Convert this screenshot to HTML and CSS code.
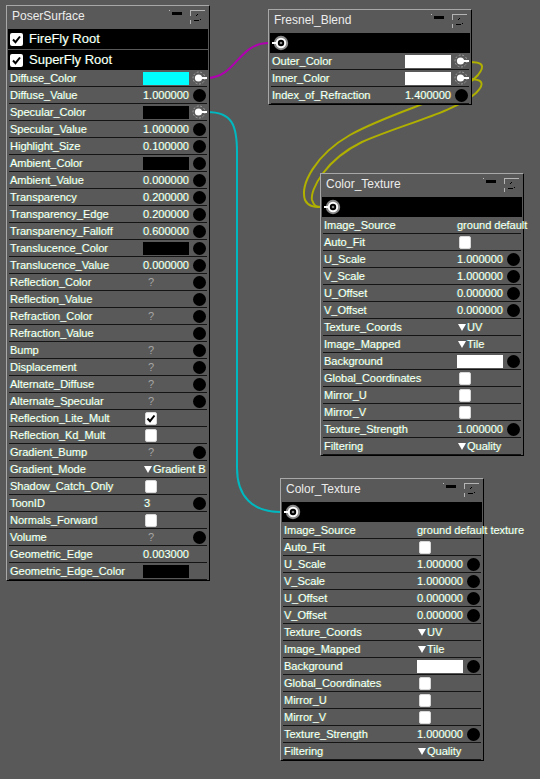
FILE: index.html
```html
<!DOCTYPE html>
<html>
<head>
<meta charset="utf-8">
<link rel="stylesheet" href="styles.css">
</head>
<body>
<svg class="wires" width="540" height="779" viewBox="0 0 540 779">
  <path d="M207,78 C236,78 238,43 269,43" stroke="#b000b0" />
  <path d="M207,112 C232,112 237,125 237,152 L237,468 C237,496 252,512 281,512" stroke="#00b8c0" />
  <path d="M469,62 C482,62 486,65 478,75 C460,96 395,110 350,135 C315,155 300,185 305,200 C308,206 313,207 321,207" stroke="#b0b000" />
  <path d="M469,79 C482,79 486,83 476,93 C455,112 400,125 362,142 C325,160 310,190 312,200 C314,206 316,207 321,207" stroke="#b0b000" />
</svg>

<!-- PoserSurface -->
<div class="node n-poser">
  <div class="title"><span>PoserSurface</span>
    <span class="ctrls"><span class="mindot"></span><span class="min"></span>
      <svg class="opt" width="15" height="14" viewBox="0 0 15 14" shape-rendering="crispEdges"><path d="M0 0.5H15M0.5 0V6M0.5 10V14" stroke="#b4b4b4" fill="none"/><rect x="7" y="4" width="1" height="1"/><rect x="6" y="5" width="1" height="1"/><rect x="4" y="10" width="5" height="1"/><rect x="10" y="9" width="1" height="1"/></svg>
    </span>
  </div>
  <div class="root"><span class="rcb"><svg width="13" height="13" viewBox="0 0 13 13"><path d="M3 6.5 L5.5 9.2 L10 3.5" stroke="#000" stroke-width="2" fill="none"/></svg></span>FireFly Root</div>
  <div class="root"><span class="rcb"><svg width="13" height="13" viewBox="0 0 13 13"><path d="M3 6.5 L5.5 9.2 L10 3.5" stroke="#000" stroke-width="2" fill="none"/></svg></span>SuperFly Root</div>

  <div class="row"><span class="lbl">Diffuse_Color</span><span class="val"><span class="sw sw-cyan"></span></span><span class="port"><svg class="plug" width="15" height="14" viewBox="0 0 15 14"><circle cx="7" cy="7" r="6" fill="none" stroke="#a0a0a0" stroke-dasharray="2 1.6"/><circle cx="6.5" cy="7" r="3.6" fill="#fff"/><rect x="7" y="6" width="8" height="2" fill="#fff"/></svg></span></div>
  <div class="row"><span class="lbl">Diffuse_Value</span><span class="val">1.000000</span><span class="port"><span class="dot"></span></span></div>
  <div class="row"><span class="lbl">Specular_Color</span><span class="val"><span class="sw sw-black"></span></span><span class="port"><svg class="plug" width="15" height="14" viewBox="0 0 15 14"><circle cx="7" cy="7" r="6" fill="none" stroke="#a0a0a0" stroke-dasharray="2 1.6"/><circle cx="6.5" cy="7" r="3.6" fill="#fff"/><rect x="7" y="6" width="8" height="2" fill="#fff"/></svg></span></div>
  <div class="row"><span class="lbl">Specular_Value</span><span class="val">1.000000</span><span class="port"><span class="dot"></span></span></div>
  <div class="row"><span class="lbl">Highlight_Size</span><span class="val">0.100000</span><span class="port"><span class="dot"></span></span></div>
  <div class="row"><span class="lbl">Ambient_Color</span><span class="val"><span class="sw sw-black"></span></span><span class="port"><span class="dot"></span></span></div>
  <div class="row"><span class="lbl">Ambient_Value</span><span class="val">0.000000</span><span class="port"><span class="dot"></span></span></div>
  <div class="row"><span class="lbl">Transparency</span><span class="val">0.200000</span><span class="port"><span class="dot"></span></span></div>
  <div class="row"><span class="lbl">Transparency_Edge</span><span class="val">0.200000</span><span class="port"><span class="dot"></span></span></div>
  <div class="row"><span class="lbl">Transparency_Falloff</span><span class="val">0.600000</span><span class="port"><span class="dot"></span></span></div>
  <div class="row"><span class="lbl">Translucence_Color</span><span class="val"><span class="sw sw-black"></span></span><span class="port"><span class="dot"></span></span></div>
  <div class="row"><span class="lbl">Translucence_Value</span><span class="val">0.000000</span><span class="port"><span class="dot"></span></span></div>
  <div class="row"><span class="lbl">Reflection_Color</span><span class="val"><span class="q">?</span></span><span class="port"><span class="dot"></span></span></div>
  <div class="row"><span class="lbl">Reflection_Value</span><span class="val"></span><span class="port"><span class="dot"></span></span></div>
  <div class="row"><span class="lbl">Refraction_Color</span><span class="val"><span class="q">?</span></span><span class="port"><span class="dot"></span></span></div>
  <div class="row"><span class="lbl">Refraction_Value</span><span class="val"></span><span class="port"><span class="dot"></span></span></div>
  <div class="row"><span class="lbl">Bump</span><span class="val"><span class="q">?</span></span><span class="port"><span class="dot"></span></span></div>
  <div class="row"><span class="lbl">Displacement</span><span class="val"><span class="q">?</span></span><span class="port"><span class="dot"></span></span></div>
  <div class="row"><span class="lbl">Alternate_Diffuse</span><span class="val"><span class="q">?</span></span><span class="port"><span class="dot"></span></span></div>
  <div class="row"><span class="lbl">Alternate_Specular</span><span class="val"><span class="q">?</span></span><span class="port"><span class="dot"></span></span></div>
  <div class="row"><span class="lbl">Reflection_Lite_Mult</span><span class="val"><span class="cb"><svg width="12" height="13" viewBox="0 0 12 13"><path d="M2.5 6.5 L5 9.2 L9.5 3.5" stroke="#000" stroke-width="2" fill="none"/></svg></span></span><span class="port"></span></div>
  <div class="row"><span class="lbl">Reflection_Kd_Mult</span><span class="val"><span class="cb"></span></span><span class="port"></span></div>
  <div class="row"><span class="lbl">Gradient_Bump</span><span class="val"><span class="q">?</span></span><span class="port"><span class="dot"></span></span></div>
  <div class="row"><span class="lbl">Gradient_Mode</span><span class="val"><span class="dd">Gradient B</span></span><span class="port"></span></div>
  <div class="row"><span class="lbl">Shadow_Catch_Only</span><span class="val"><span class="cb"></span></span><span class="port"></span></div>
  <div class="row"><span class="lbl">ToonID</span><span class="val"><span class="num">3</span></span><span class="port"><span class="dot"></span></span></div>
  <div class="row"><span class="lbl">Normals_Forward</span><span class="val"><span class="cb"></span></span><span class="port"></span></div>
  <div class="row"><span class="lbl">Volume</span><span class="val"><span class="q">?</span></span><span class="port"><span class="dot"></span></span></div>
  <div class="row"><span class="lbl">Geometric_Edge</span><span class="val">0.003000</span><span class="port"></span></div>
  <div class="row"><span class="lbl">Geometric_Edge_Color</span><span class="val"><span class="sw sw-black"></span></span><span class="port"></span></div>
</div>

<!-- Fresnel_Blend -->
<div class="node n-fresnel">
  <div class="title"><span>Fresnel_Blend</span>
    <span class="ctrls"><span class="mindot"></span><span class="min"></span>
      <svg class="opt" width="15" height="14" viewBox="0 0 15 14" shape-rendering="crispEdges"><path d="M0 0.5H15M0.5 0V6M0.5 10V14" stroke="#b4b4b4" fill="none"/><rect x="7" y="4" width="1" height="1"/><rect x="6" y="5" width="1" height="1"/><rect x="4" y="10" width="5" height="1"/><rect x="10" y="9" width="1" height="1"/></svg>
    </span>
  </div>
  <div class="root"><svg class="out" width="17" height="16" viewBox="0 0 17 16"><circle cx="9" cy="8" r="7.2" fill="#8a8a8a"/><circle cx="9" cy="8" r="5.2" fill="#fff"/><circle cx="9" cy="8" r="3.2" fill="#000"/><circle cx="9" cy="8" r="1.3" fill="#8a8a8a"/><rect x="0" y="7" width="4.5" height="2" fill="#fff"/></svg></div>
  <div class="row"><span class="lbl">Outer_Color</span><span class="val"><span class="sw sw-white"></span></span><span class="port"><svg class="plug" width="15" height="14" viewBox="0 0 15 14"><circle cx="7" cy="7" r="6" fill="none" stroke="#a0a0a0" stroke-dasharray="2 1.6"/><circle cx="6.5" cy="7" r="3.6" fill="#fff"/><rect x="7" y="6" width="8" height="2" fill="#fff"/></svg></span></div>
  <div class="row"><span class="lbl">Inner_Color</span><span class="val"><span class="sw sw-white"></span></span><span class="port"><svg class="plug" width="15" height="14" viewBox="0 0 15 14"><circle cx="7" cy="7" r="6" fill="none" stroke="#a0a0a0" stroke-dasharray="2 1.6"/><circle cx="6.5" cy="7" r="3.6" fill="#fff"/><rect x="7" y="6" width="8" height="2" fill="#fff"/></svg></span></div>
  <div class="row"><span class="lbl">Index_of_Refraction</span><span class="val">1.400000</span><span class="port"><span class="dot"></span></span></div>
</div>

<!-- Color_Texture 1 -->
<div class="node n-tex1">
  <div class="title"><span>Color_Texture</span>
    <span class="ctrls"><span class="mindot"></span><span class="min"></span>
      <svg class="opt" width="15" height="14" viewBox="0 0 15 14" shape-rendering="crispEdges"><path d="M0 0.5H15M0.5 0V6M0.5 10V14" stroke="#b4b4b4" fill="none"/><rect x="7" y="4" width="1" height="1"/><rect x="6" y="5" width="1" height="1"/><rect x="4" y="10" width="5" height="1"/><rect x="10" y="9" width="1" height="1"/></svg>
    </span>
  </div>
  <div class="root"><svg class="out" width="17" height="16" viewBox="0 0 17 16"><circle cx="9" cy="8" r="7.2" fill="#8a8a8a"/><circle cx="9" cy="8" r="5.2" fill="#fff"/><circle cx="9" cy="8" r="3.2" fill="#000"/><circle cx="9" cy="8" r="1.3" fill="#8a8a8a"/><rect x="0" y="7" width="4.5" height="2" fill="#fff"/></svg></div>
  <div class="row"><span class="lbl">Image_Source</span><span class="val">ground default</span><span class="port"></span></div>
  <div class="row"><span class="lbl">Auto_Fit</span><span class="val"><span class="cb"></span></span><span class="port"></span></div>
  <div class="row"><span class="lbl">U_Scale</span><span class="val">1.000000</span><span class="port"><span class="dot"></span></span></div>
  <div class="row"><span class="lbl">V_Scale</span><span class="val">1.000000</span><span class="port"><span class="dot"></span></span></div>
  <div class="row"><span class="lbl">U_Offset</span><span class="val">0.000000</span><span class="port"><span class="dot"></span></span></div>
  <div class="row"><span class="lbl">V_Offset</span><span class="val">0.000000</span><span class="port"><span class="dot"></span></span></div>
  <div class="row"><span class="lbl">Texture_Coords</span><span class="val"><span class="dd">UV</span></span><span class="port"></span></div>
  <div class="row"><span class="lbl">Image_Mapped</span><span class="val"><span class="dd">Tile</span></span><span class="port"></span></div>
  <div class="row"><span class="lbl">Background</span><span class="val"><span class="sw sw-white"></span></span><span class="port"><span class="dot"></span></span></div>
  <div class="row"><span class="lbl">Global_Coordinates</span><span class="val"><span class="cb"></span></span><span class="port"></span></div>
  <div class="row"><span class="lbl">Mirror_U</span><span class="val"><span class="cb"></span></span><span class="port"></span></div>
  <div class="row"><span class="lbl">Mirror_V</span><span class="val"><span class="cb"></span></span><span class="port"></span></div>
  <div class="row"><span class="lbl">Texture_Strength</span><span class="val">1.000000</span><span class="port"><span class="dot"></span></span></div>
  <div class="row"><span class="lbl">Filtering</span><span class="val"><span class="dd">Quality</span></span><span class="port"></span></div>
</div>

<!-- Color_Texture 2 -->
<div class="node n-tex2">
  <div class="title"><span>Color_Texture</span>
    <span class="ctrls"><span class="mindot"></span><span class="min"></span>
      <svg class="opt" width="15" height="14" viewBox="0 0 15 14" shape-rendering="crispEdges"><path d="M0 0.5H15M0.5 0V6M0.5 10V14" stroke="#b4b4b4" fill="none"/><rect x="7" y="4" width="1" height="1"/><rect x="6" y="5" width="1" height="1"/><rect x="4" y="10" width="5" height="1"/><rect x="10" y="9" width="1" height="1"/></svg>
    </span>
  </div>
  <div class="root"><svg class="out" width="17" height="16" viewBox="0 0 17 16"><circle cx="9" cy="8" r="7.2" fill="#8a8a8a"/><circle cx="9" cy="8" r="5.2" fill="#fff"/><circle cx="9" cy="8" r="3.2" fill="#000"/><circle cx="9" cy="8" r="1.3" fill="#8a8a8a"/><rect x="0" y="7" width="4.5" height="2" fill="#fff"/></svg></div>
  <div class="row"><span class="lbl">Image_Source</span><span class="val">ground default texture</span><span class="port"></span></div>
  <div class="row"><span class="lbl">Auto_Fit</span><span class="val"><span class="cb"></span></span><span class="port"></span></div>
  <div class="row"><span class="lbl">U_Scale</span><span class="val">1.000000</span><span class="port"><span class="dot"></span></span></div>
  <div class="row"><span class="lbl">V_Scale</span><span class="val">1.000000</span><span class="port"><span class="dot"></span></span></div>
  <div class="row"><span class="lbl">U_Offset</span><span class="val">0.000000</span><span class="port"><span class="dot"></span></span></div>
  <div class="row"><span class="lbl">V_Offset</span><span class="val">0.000000</span><span class="port"><span class="dot"></span></span></div>
  <div class="row"><span class="lbl">Texture_Coords</span><span class="val"><span class="dd">UV</span></span><span class="port"></span></div>
  <div class="row"><span class="lbl">Image_Mapped</span><span class="val"><span class="dd">Tile</span></span><span class="port"></span></div>
  <div class="row"><span class="lbl">Background</span><span class="val"><span class="sw sw-white"></span></span><span class="port"><span class="dot"></span></span></div>
  <div class="row"><span class="lbl">Global_Coordinates</span><span class="val"><span class="cb"></span></span><span class="port"></span></div>
  <div class="row"><span class="lbl">Mirror_U</span><span class="val"><span class="cb"></span></span><span class="port"></span></div>
  <div class="row"><span class="lbl">Mirror_V</span><span class="val"><span class="cb"></span></span><span class="port"></span></div>
  <div class="row"><span class="lbl">Texture_Strength</span><span class="val">1.000000</span><span class="port"><span class="dot"></span></span></div>
  <div class="row"><span class="lbl">Filtering</span><span class="val"><span class="dd">Quality</span></span><span class="port"></span></div>
</div>
</body>
</html>
```

FILE: styles.css
```css
* { box-sizing: border-box; }
html, body { margin: 0; padding: 0; }
body {
  width: 540px;
  height: 779px;
  position: relative;
  overflow: hidden;
  background: #595959;
  font-family: "Liberation Sans", Arial, sans-serif;
  color: #fff;
}

.wires {
  position: absolute;
  left: 0;
  top: 0;
  z-index: 0;
}
.wires path {
  fill: none;
  stroke-width: 2;
}

.node {
  position: absolute;
  z-index: 1;
  width: 204px;
  background: #595959;
  border-top: 1px solid #a8a8a8;
  border-left: 1px solid #a8a8a8;
  border-right: 1px solid #000;
  border-bottom: 1px solid #000;
}
.n-poser { left: 6px; top: 5px; }
.n-fresnel { left: 268px; top: 9px; }
.n-tex1 { left: 320px; top: 173px; }
.n-tex2 { left: 280px; top: 478px; }

.title {
  height: 23px;
  line-height: 21px;
  padding: 0 0 2px 5px;
  font-size: 12px;
  color: #ececec;
  display: flex;
  justify-content: space-between;
  align-items: flex-start;
}
.ctrls {
  display: flex;
  align-items: flex-start;
  margin-right: 4px;
}
.mindot {
  width: 1px;
  height: 1px;
  background: #bdbdbd;
  margin-top: 4px;
  margin-right: 2px;
}
.min {
  width: 10px;
  height: 3px;
  background: #000;
  margin-top: 6px;
  margin-right: 8px;
}
.opt { margin-top: 4px; display: block; }

.root {
  height: 20px;
  margin: 0 1px;
  background: #000;
  display: flex;
  align-items: center;
  padding-left: 2px;
  font-size: 13px;
  line-height: 20px;
  text-shadow: -0.6px 0 rgba(0, 255, 255, 0.25), 0.6px 0 rgba(255, 255, 0, 0.25);
}
.root + .root { margin-top: 1px; }
.rcb {
  width: 13px;
  height: 13px;
  background: #fff;
  border-radius: 2px;
  margin-right: 6px;
  display: flex;
}
.rcb svg, .cb svg { display: block; }
.out { display: block; }

.row {
  display: flex;
  align-items: center;
  height: 17px;
  margin: 0 2px;
  border-bottom: 1px solid #141414;
  font-size: 11px;
  line-height: 16px;
  text-shadow: -0.7px 0 rgba(0, 255, 255, 0.3), 0.7px 0 rgba(255, 255, 0, 0.3);
}
.lbl {
  flex: 0 0 134px;
  padding-left: 1px;
  white-space: nowrap;
  overflow: hidden;
}
.val {
  flex: 0 0 46px;
  height: 16px;
  display: flex;
  align-items: center;
  white-space: nowrap;
}
.port {
  flex: 0 0 14px;
  margin-left: 4px;
  height: 16px;
  display: flex;
  align-items: center;
}
.plug { display: block; margin-left: -1px; overflow: visible; }

.sw { width: 46px; height: 13px; }
.sw-cyan { background: #00ffff; }
.sw-black { background: #000; }
.sw-white { background: #fff; }

.dot {
  width: 13px;
  height: 13px;
  border-radius: 50%;
  background: #000;
}

.q {
  padding-left: 5px;
  color: #a6a6a6;
  text-shadow: none;
}
.num { padding-left: 1px; }

.cb {
  width: 12px;
  height: 13px;
  margin-left: 2px;
  background: #fff;
  border: 1px solid #d8d8d8;
  border-radius: 2px;
}
.cb svg { margin: -1px 0 0 -1px; }

.dd {
  display: flex;
  align-items: center;
  padding-left: 1px;
}
.dd::before {
  content: "";
  width: 0;
  height: 0;
  border-left: 4.5px solid transparent;
  border-right: 4.5px solid transparent;
  border-top: 7px solid #fff;
  margin-right: 1px;
}
```
